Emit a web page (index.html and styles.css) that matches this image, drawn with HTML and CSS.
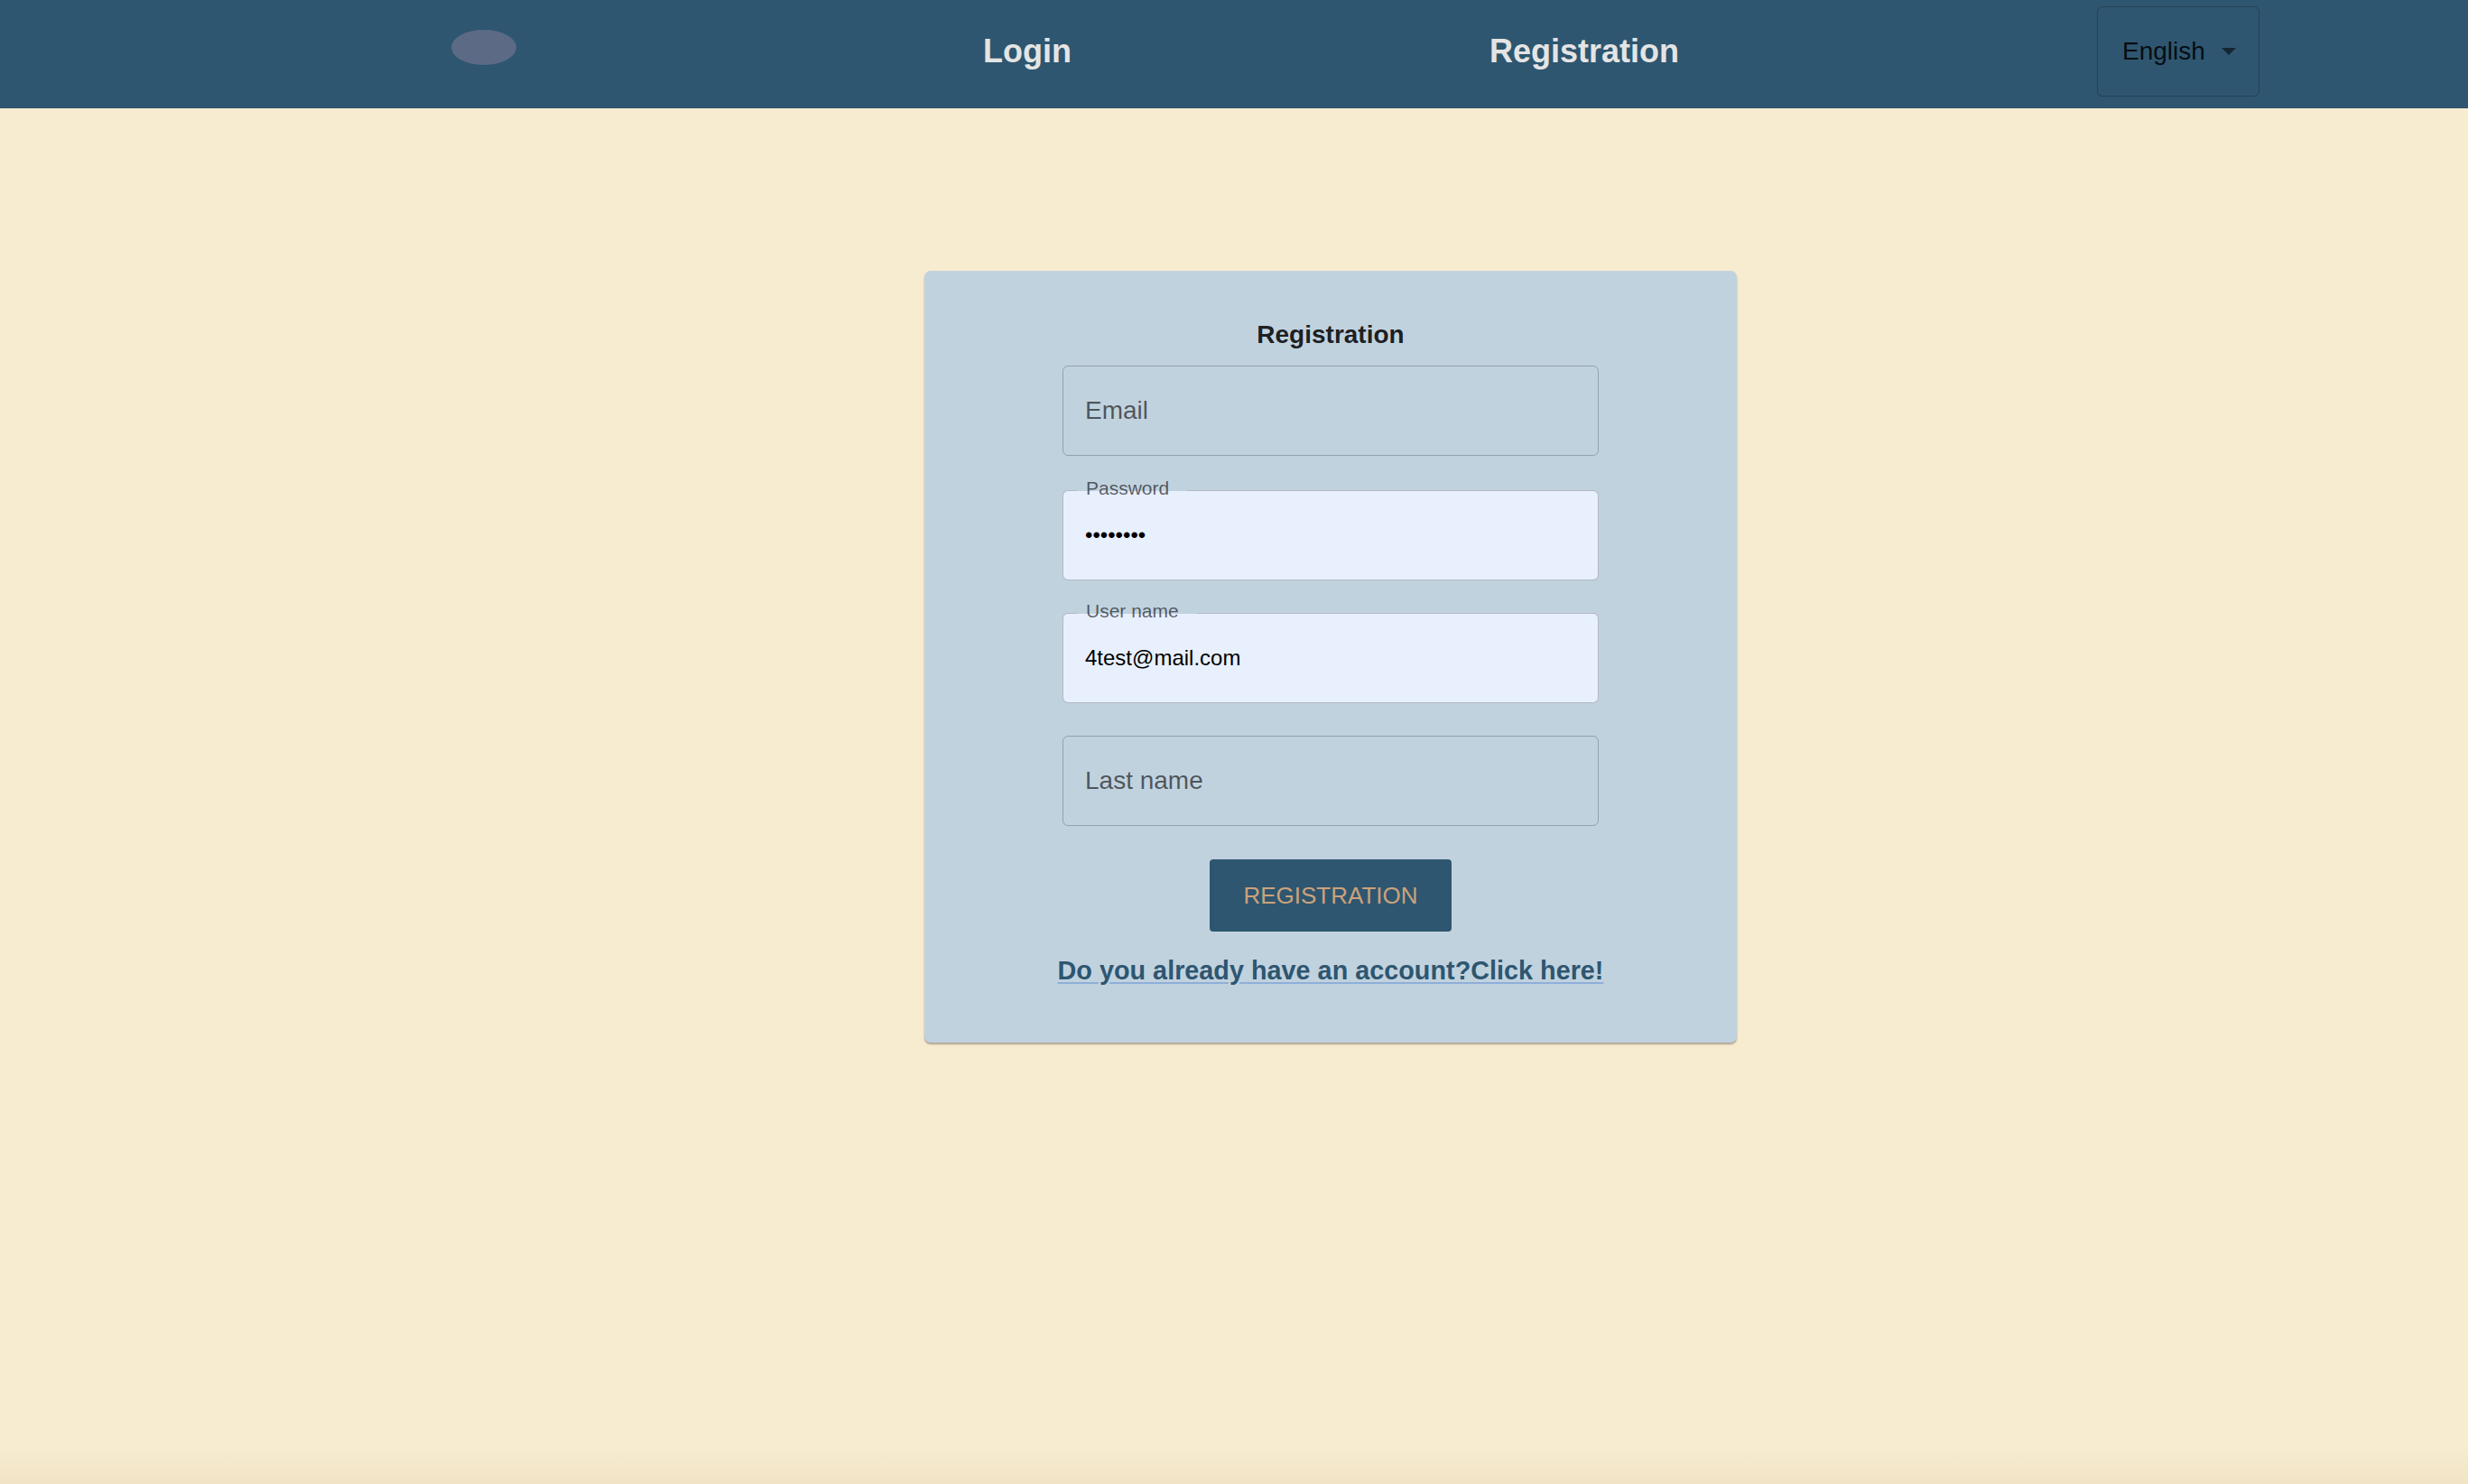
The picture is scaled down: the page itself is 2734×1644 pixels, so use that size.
FILE: index.html
```html
<!DOCTYPE html>
<html lang="en">
<head>
<meta charset="utf-8">
<title>Registration</title>
<link rel="stylesheet" href="styles.css">
</head>
<body>
<header class="topbar">
  <div class="logo"><span class="logo-oval"></span></div>
  <a class="nav-link" href="#">Login</a>
  <a class="nav-link" href="#">Registration</a>
  <div class="lang-select">
    <span class="lang-value">English</span>
    <svg class="lang-arrow" width="16" height="8" viewBox="0 0 16 8" aria-hidden="true"><polygon points="0,0 16,0 8,8"/></svg>
  </div>
</header>
<main class="page">
  <form class="card">
    <h1 class="card-title">Registration</h1>
    <div class="field field-first">
      <input class="field-input" type="email" placeholder="Email">
    </div>
    <div class="field">
      <label class="field-label">Password</label>
      <input class="field-input filled" type="password" value="12345678">
    </div>
    <div class="field">
      <label class="field-label">User name</label>
      <input class="field-input filled" type="text" value="4test@mail.com">
    </div>
    <div class="field">
      <input class="field-input" type="text" placeholder="Last name">
    </div>
    <button class="submit-btn" type="button">REGISTRATION</button>
    <a class="signin-link" href="#">Do you already have an account?Click here!</a>
  </form>
</main>
</body>
</html>
```
FILE: styles.css
```css
* { box-sizing: border-box; }

html, body { margin: 0; padding: 0; }

body {
  min-height: 100vh;
  font-family: "Liberation Sans", Arial, sans-serif;
  background: linear-gradient(to bottom, #f7ebd0 0, #f7ebd0 calc(100% - 40px), #f1e4c6 100%);
}

.topbar {
  height: 120px;
  background: #2e5670;
  display: flex;
  align-items: center;
  padding: 0 0 6px 500px;
  gap: 463px;
}

.logo {
  width: 126px;
  display: flex;
  align-items: center;
  margin-bottom: 9px;
}

.logo-oval {
  display: block;
  width: 72px;
  height: 39px;
  border-radius: 50%;
  background: #5c6a86;
}

.nav-link {
  color: #e4e4e4;
  font-size: 36px;
  font-weight: 700;
  line-height: 41px;
  text-decoration: none;
  margin-bottom: 2px;
}

.lang-select {
  height: 100px;
  display: flex;
  align-items: center;
  gap: 18px;
  padding: 0 25px 0 27px;
  border: 1px solid rgba(0, 0, 0, 0.23);
  border-radius: 6px;
}

.lang-value {
  font-size: 28px;
  line-height: 32px;
  color: rgba(0, 0, 0, 0.87);
}

.lang-arrow { fill: rgba(0, 0, 0, 0.54); display: block; }

.page {
  padding: 180px 0 0 1024px;
}

.card {
  width: 900px;
  background: #c1d2df;
  border-radius: 7px;
  box-shadow: 0 2px 2px rgba(0, 0, 0, 0.3);
  display: flex;
  flex-direction: column;
  align-items: center;
  padding: 55px 0 63px;
  margin: 0;
}

.card-title {
  margin: 0 0 18px;
  font-size: 28px;
  line-height: 32px;
  font-weight: 700;
  color: rgba(0, 0, 0, 0.87);
}

.field {
  position: relative;
  width: 594px;
  margin-bottom: 36px;
}

.field-first { margin-bottom: 38px; }

.field:last-of-type { margin-bottom: 0; }

.field-input {
  display: block;
  width: 100%;
  height: 100px;
  margin: 0;
  padding: 0 24px;
  border: 1px solid rgba(0, 0, 0, 0.23);
  border-radius: 6px;
  background: transparent;
  font-family: "Liberation Sans", Arial, sans-serif;
  font-size: 28px;
  color: #000;
  outline: none;
}

.field-input::placeholder { color: rgba(0, 0, 0, 0.6); opacity: 1; }

.field-input.filled {
  background: #e8f0fe;
  font-size: 24px;
}

.field-label {
  position: absolute;
  top: -14px;
  left: 16px;
  padding: 0 20px 0 10px;
  font-size: 21px;
  line-height: 24px;
  color: rgba(0, 0, 0, 0.6);
  background: linear-gradient(to bottom, #c1d2df 0, #c1d2df 15px, transparent 15px);
  z-index: 1;
}

.submit-btn {
  margin-top: 37px;
  width: 268px;
  height: 80px;
  border: none;
  border-radius: 4px;
  background: #2e5670;
  color: #cca27b;
  font-family: "Liberation Sans", Arial, sans-serif;
  font-size: 26px;
  padding: 0;
}

.signin-link {
  margin-top: 26px;
  font-size: 28.8px;
  line-height: 34px;
  font-weight: 700;
  color: #2e5670;
  text-decoration: underline;
  text-decoration-color: #8eafd8;
  text-decoration-thickness: 2px;
  text-underline-offset: 3px;
}
```
